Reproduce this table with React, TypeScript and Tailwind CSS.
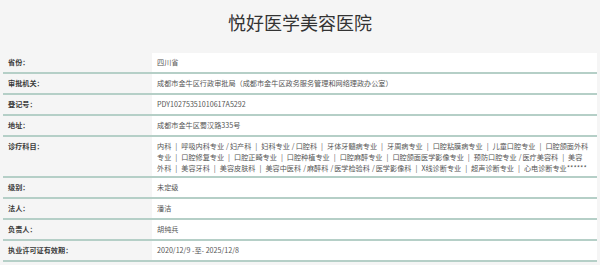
const rows: { label: string; value: string }[] = [
  { label: "省份：", value: "四川省" },
  { label: "审批机关：", value: "成都市金牛区行政审批局（成都市金牛区政务服务管理和网络理政办公室）" },
  { label: "登记号：", value: "PDY10275351010617A5292" },
  { label: "地址：", value: "成都市金牛区蜀汉路335号" },
];

const rowsAfter: { label: string; value: string }[] = [
  { label: "级别：", value: "未定级" },
  { label: "法人：", value: "潘洁" },
  { label: "负责人：", value: "胡纯兵" },
  { label: "执业许可证有效期：", value: "2020/12/9 -至- 2025/12/8" },
];

// 诊疗科目, one array per printed line; "|" and "/" are the separators
const subjectLines: string[][] = [
  ["内科", "|", "呼吸内科专业", "/", "妇产科", "|", "妇科专业", "/", "口腔科", "|", "牙体牙髓病专业", "|", "牙周病专业", "|", "口腔粘膜病专业", "|", "儿童口腔专业", "|", "口腔颌面外科"],
  ["专业", "|", "口腔修复专业", "|", "口腔正畸专业", "|", "口腔种植专业", "|", "口腔麻醉专业", "|", "口腔颌面医学影像专业", "|", "预防口腔专业", "/", "医疗美容科", "|", "美容"],
  ["外科", "|", "美容牙科", "|", "美容皮肤科", "|", "美容中医科", "/", "麻醉科", "/", "医学检验科", "/", "医学影像科", "|", "X线诊断专业", "|", "超声诊断专业", "|", "心电诊断专业******"],
];

function Row({ label, value }: { label: string; value: string }) {
  return (
    <div className="flex h-[21px] border-b-2 border-[#b5cfc7]">
      <div className="w-[149px] shrink-0 pl-[5px] flex items-center font-bold text-[#3a3a3a]">{label}</div>
      <div className="flex-1 bg-white pl-[5px] flex items-center text-[#555] whitespace-nowrap">{value}</div>
    </div>
  );
}

function Subject({ word }: { word: string }) {
  if (word === "|") return <span className="mx-[4px]">|</span>;
  if (word === "/") return <span className="ml-[2px] mr-[1px]">/</span>;
  return <span>{word}</span>;
}

export default function App() {
  return (
    <div
      className="w-full h-[265px] bg-[#f5f5f5] overflow-hidden text-[7.15px] leading-[11px]"
      style={{ fontFamily: '"Noto Sans CJK SC", "Noto Sans", sans-serif' }}
    >
      <div className="h-[53px] pb-[9px] flex items-center justify-center">
        <h1 className="text-[18px] leading-[22px] text-[#333] font-normal">悦好医学美容医院</h1>
      </div>
      <div className="mx-[3px]">
        {rows.map((r, i) => (
          <Row key={i} label={r.label} value={r.value} />
        ))}
        <div className="flex h-[41px] border-b-2 border-[#b5cfc7]">
          <div className="w-[149px] shrink-0 pl-[5px] pt-[3px] flex items-start font-bold text-[#3a3a3a]">
            <span className="mt-[1px]">诊疗科目：</span>
          </div>
          <div className="flex-1 bg-white pl-[5px] pt-[4px] text-[#555]">
            {subjectLines.map((line, i) => (
              <div key={i} className="whitespace-nowrap h-[11px]">
                {line.map((w, j) => (
                  <Subject key={j} word={w} />
                ))}
              </div>
            ))}
          </div>
        </div>
        {rowsAfter.map((r, i) => (
          <Row key={i} label={r.label} value={r.value} />
        ))}
      </div>
    </div>
  );
}
